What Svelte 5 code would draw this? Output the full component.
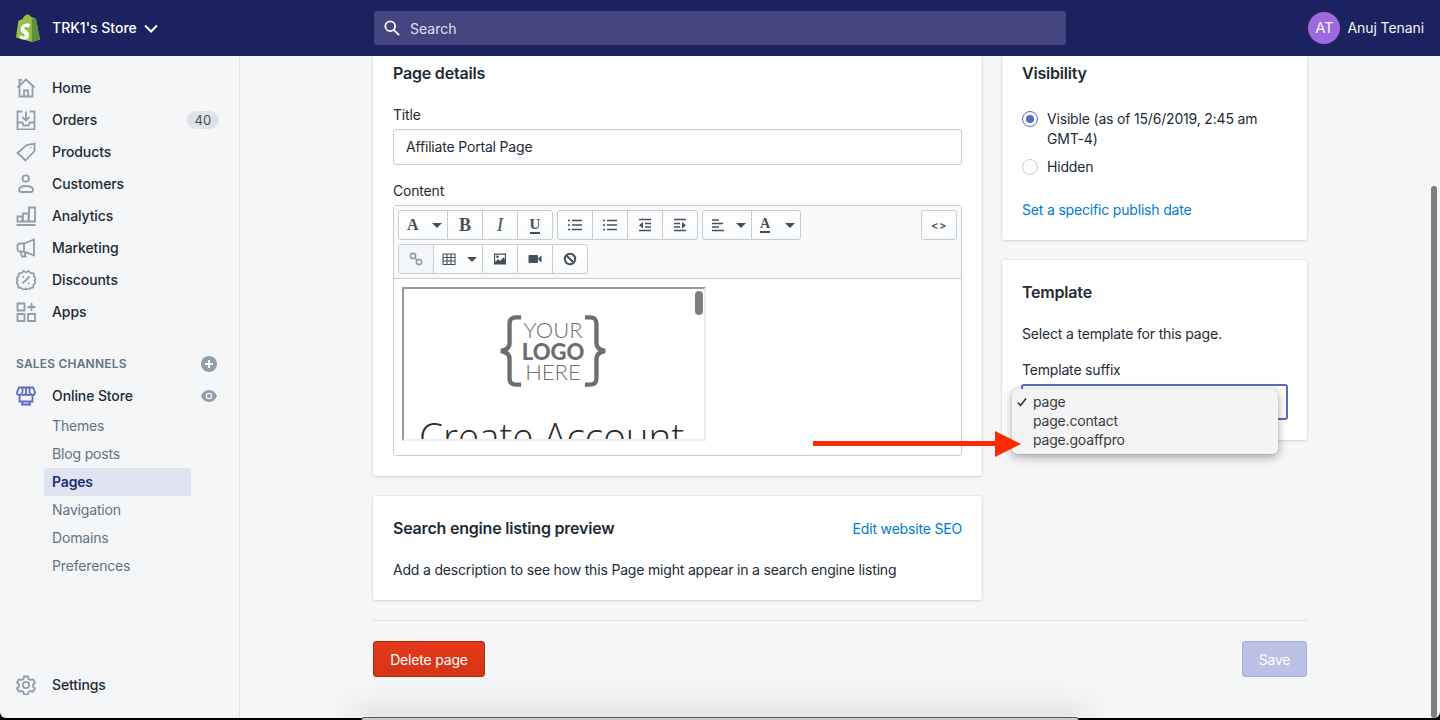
<script lang="ts">
	const nav = [
		{ label: 'Home', d: 'M1.500 9.500 10 1.500l8.500 8M3.500 8v10.500h13V8M8 18.500v-6h4v6M3.500 6.500V2H6' },
		{ label: 'Orders', d: 'M6.500 1.500h-5v18h17v-18h-5M10 1.500V10M6.500 7l3.500 3.500L13.500 7M1.500 12.500h5l1 3h5l1-3h5' },
		{ label: 'Products', d: 'M1.500 11 10.500 3l8-1.500V9l-9 9.500zM14.500 5.500h1' },
		{ label: 'Customers', d: 'M13 4.500a3.200 3.200 0 1 1-6.400 0 3.200 3.200 0 0 1 6.400 0zM3 16c0-2.500 3-4 7-4s7 1.500 7 4c0 1.500-1.500 2-2.500 2h-9C4.500 18 3 17.500 3 16z' },
		{ label: 'Analytics', d: 'M.500 19h19M1.500 15.500v-5h5v5zM7 15.500v-8h5.500v8zM13 15.500V1.500h6v14z' },
		{ label: 'Marketing', d: 'M1.500 7.500C1.500 6 2.500 5.500 4 5.500h4L18 1.500v16L8 13.500H4c-1.500 0-2.500-.5-2.500-2zM8 5.500v8M4.500 13.500l1.500 5h3.500l-1-5' },
		{ label: 'Discounts', d: 'M7.500 1 10 2.500 12.500 1l2.300 2 2.800.5.500 2.800L19.500 8.500 18.500 10.500l1 2-1.900 2.200-.5 2.800-2.800.5-2.300 2L10 18.500l-2.500 1.500-2.300-2-2.800-.5-.5-2.800L.500 12.500l1-2-1-2 1.900-2.200.5-2.800 2.800-.5zM13.500 6.500l-7 7M6.500 7h1.500M12 13.500h1.500' },
		{ label: 'Apps', d: 'M1.500 1.500h7v7h-7zM1.500 12h7v7h-7zM12 12h7v7h-7zM15.500 1v8M11.500 5h8' }
	];
	const subNav = ['Themes', 'Blog posts', 'Pages', 'Navigation', 'Domains', 'Preferences'];
	const options = ['page', 'page.contact', 'page.goaffpro'];
</script>

{#snippet caret()}
	<svg class="caret" viewBox="0 0 10 5"><path d="M0 0h10L5 5z" /></svg>
{/snippet}

{#snippet lines(d: string, tri = '')}
	<svg class="tool-icon" viewBox="0 0 14 14">
		<path {d} />
		{#if tri}<path class="tri" d={tri} />{/if}
	</svg>
{/snippet}

<div class="screen">
	<div class="window">
		<header class="topbar">
			<div class="store">
				<svg class="logo" viewBox="2 0 22 28" preserveAspectRatio="none">
					<path d="M2 23.500 4.200 6.500C6 6 7 5.500 8 5c1-2.500 3-4.500 5-4.500 1 0 1.500.5 2 1.500L17 3.500 19.500 4l.8 1L24 25.500 16.500 28z" fill="#95bf47" />
					<path d="M16.500 28 24 25.500 20.300 5 18 4.500 16.500 5z" fill="#5e8e3e" />
					<path d="M14.800 10.500l-1 3c-.8-.4-1.700-.6-2.500-.5-1.900.1-1.900 1.300-1.900 1.600.1 1.600 4.300 2 4.600 5.800.2 3-1.600 5-4.200 5.200-3 .2-4.700-1.600-4.700-1.600l.7-2.700s1.700 1.300 3 1.200c.9 0 1.200-.8 1.200-1.300-.1-2.100-3.600-2-3.800-5.500-.2-2.900 1.700-5.900 6-6.100 1.600-.1 2.600.4 2.600.4z" fill="#fff" />
				</svg>
				<span class="store-name">TRK1's Store</span>
				<svg class="chevron" viewBox="0 0 14 9"><path d="M1 1.500l6 6 6-6" /></svg>
			</div>
			<div class="search">
				<svg class="search-icon" viewBox="0 0 18 18"><path d="M12.500 7a5.500 5.500 0 1 1-11 0 5.500 5.500 0 0 1 11 0zM11 11l6 6" /></svg>
				<span>Search</span>
			</div>
			<div class="user">
				<span class="avatar">AT</span>
				<span>Anuj Tenani</span>
			</div>
		</header>

		<div class="body">
			<aside class="sidebar">
				<nav class="nav">
					{#each nav as item}
						<div class="nav-item">
							<svg class="nav-icon" viewBox="0 0 20 20"><path d={item.d} /></svg>
							<span>{item.label}</span>
							{#if item.label === 'Orders'}<span class="badge">40</span>{/if}
						</div>
					{/each}
				</nav>

				<div class="section-title">
					<span>Sales channels</span>
					<svg class="side-action" viewBox="0 0 16 16">
						<circle cx="8" cy="8" r="8" fill="#919eab" />
						<path d="M8 4v8M4 8h8" stroke="#f4f6f8" stroke-width="2" />
					</svg>
				</div>
				<div class="nav-item channel">
					<svg class="nav-icon store-icon" viewBox="0 0 20 20">
						<path d="M3 1.500h14l2 5c0 1.500-1 2.500-2.200 2.500S14.500 8 14.500 7c0 1-1 2-2.200 2S10 8 10 7c0 1-1 2-2.300 2S5.500 8 5.500 7c0 1-1 2-2.300 2S1 8 1 6.500zM3.500 9v6.500h13V9M6.500 15.500v3M13.500 15.500v3M5 18.500h10M6.500 2v5M13.500 2v5M10 2v5" />
					</svg>
					<span>Online Store</span>
					<svg class="side-action eye" viewBox="0 0 16 12">
						<path d="M8 0C4 0 1.200 3 0 6c1.200 3 4 6 8 6s6.800-3 8-6c-1.200-3-4-6-8-6z" fill="#919eab" />
						<circle cx="8" cy="6" r="3.300" fill="#f4f6f8" />
						<circle cx="8" cy="6" r="2" fill="#919eab" />
					</svg>
				</div>
				<div class="sub-nav">
					{#each subNav as item}
						<div class="sub-item" class:active={item === 'Pages'}>{item}</div>
					{/each}
				</div>

				<div class="nav-item settings">
					<svg class="nav-icon" viewBox="0 0 20 20">
						<path d="M8 1.500h4l.6 2.600 1.900 1 2.500-.8 2 3.400-2 1.800v2l2 1.800-2 3.400-2.500-.8-1.900 1-.6 2.600H8l-.6-2.600-1.900-1-2.500.8-2-3.400 2-1.800v-2l-2-1.800 2-3.400 2.500.8 1.900-1z" />
						<circle cx="10" cy="10" r="3.200" />
					</svg>
					<span>Settings</span>
				</div>
			</aside>

			<main class="main">
				<div class="content">
					<div class="columns">
						<div class="column">
							<section class="card details">
								<h2>Page details</h2>
								<div class="label">Title</div>
								<div class="input">Affiliate Portal Page</div>
								<div class="label content-label">Content</div>
								<div class="editor">
									<div class="toolbar">
										<div class="tool-row">
											<div class="group">
												<span class="tool wide"><b class="glyph">A</b>{@render caret()}</span>
												<span class="tool"><b class="glyph big">B</b></span>
												<span class="tool"><i class="glyph big">I</i></span>
												<span class="tool"><b class="glyph under">U</b></span>
											</div>
											<div class="group">
												<span class="tool">{@render lines('M0 2.500h2M0 7h2M0 11.500h2M4 2.500h10M4 7h10M4 11.500h10')}</span>
												<span class="tool">{@render lines('M0 2.500h2M0 7h2M0 11.500h2M4 2.500h10M4 7h10M4 11.500h10')}</span>
												<span class="tool">{@render lines('M1 1.500h12M7 5.500h6M7 9h6M1 12.500h12', 'M5 4v6.500L1 7.200z')}</span>
												<span class="tool">{@render lines('M1 1.500h12M1 5.500h6M1 9h6M1 12.500h12', 'M9 4v6.500l4-3.300z')}</span>
											</div>
											<div class="group">
												<span class="tool wide">{@render lines('M1 2h7M1 5.500h11M1 9h7M1 12.500h12')}{@render caret()}</span>
												<span class="tool wide"><b class="glyph color">A</b>{@render caret()}</span>
											</div>
											<div class="group code"><span class="tool code-tool">&lt;&gt;</span></div>
										</div>
										<div class="tool-row">
											<div class="group">
												<span class="tool off">
													<svg class="link-icon" viewBox="0 0 14 14"><circle cx="4" cy="4" r="2.600" /><circle cx="10" cy="10" r="2.600" /><path d="M6 6l2 2" /></svg>
												</span>
												<span class="tool wide">
													<svg class="table-icon" viewBox="0 0 14 14"><path d="M1 2h12v10.500H1zM1 5.500h12M1 9h12M5 2v10.500M9 2v10.500" /></svg>
													{@render caret()}
												</span>
												<span class="tool">
													<svg class="fill-icon" viewBox="0 0 14 14"><path fill-rule="evenodd" d="M1 1.500h12v11H1zM2.200 2.700v7.200l3-3 2 2 3-3.500 1.600 1.800V2.700zM4.500 3.500a1.300 1.300 0 1 1 0 2.600 1.300 1.300 0 0 1 0-2.600z" /></svg>
												</span>
												<span class="tool">
													<svg class="fill-icon" viewBox="0 0 14 14"><path d="M1.500 3h7.500c.5 0 1 .5 1 1v6c0 .5-.5 1-1 1H1.500c-.5 0-1-.5-1-1V4c0-.5.500-1 1-1zM10.500 6l3-2.500v7l-3-2.500z" /></svg>
												</span>
												<span class="tool">
													<svg class="ban-icon" viewBox="0 0 14 14"><circle cx="7" cy="7" r="5.200" /><path d="M3.300 3.300l7.400 7.400" /></svg>
												</span>
											</div>
										</div>
									</div>
									<div class="editor-body">
										<div class="preview">
											<div class="placeholder">
												<svg class="brace" viewBox="0 0 26 74"><path d="M24 2h-5c-5 0-7 2-7 7v20c0 4-3 7-9 8 6 1 9 4 9 8v20c0 5 2 7 7 7h5" /></svg>
												<div class="placeholder-text">
													<span>YOUR</span>
													<strong>LOGO</strong>
													<span>HERE</span>
												</div>
												<svg class="brace" viewBox="0 0 26 74"><path d="M2 2h5c5 0 7 2 7 7v20c0 4 3 7 9 8-6 1-9 4-9 8v20c0 5-2 7-7 7H2" /></svg>
											</div>
											<div class="create">Create Account</div>
											<span class="preview-scroll"></span>
										</div>
									</div>
								</div>
							</section>

							<section class="card seo">
								<div class="seo-head">
									<h2>Search engine listing preview</h2>
									<span class="link">Edit website SEO</span>
								</div>
								<p>Add a description to see how this Page might appear in a search engine listing</p>
							</section>
						</div>

						<div class="column">
							<section class="card visibility">
								<h2>Visibility</h2>
								<div class="radio-row">
									<span class="radio checked"></span>
									<span>Visible (as of 15/6/2019, 2:45 am GMT-4)</span>
								</div>
								<div class="radio-row hidden-row">
									<span class="radio"></span>
									<span>Hidden</span>
								</div>
								<div class="link publish">Set a specific publish date</div>
							</section>

							<section class="card template">
								<h2>Template</h2>
								<p>Select a template for this page.</p>
								<div class="label suffix">Template suffix</div>
								<div class="select">
									<div class="menu">
										{#each options as option, i}
											<div class="option">
												{#if i === 0}<svg class="check" viewBox="0 0 10 10"><path d="M1 5.500l2.500 3L9 1.500" /></svg>{/if}
												{option}
											</div>
										{/each}
									</div>
								</div>
							</section>
						</div>
					</div>

					<div class="actions">
						<button class="btn danger" type="button">Delete page</button>
						<button class="btn save" type="button">Save</button>
					</div>
				</div>
			</main>
		</div>

		<span class="scrollbar"></span>
	</div>

	<svg class="arrow" viewBox="0 0 208 26"><path d="M0 10h182V0l26 13-26 13V15H0z" /></svg>
	<div class="behind"></div>
</div>

<style>
	:global(body) {
		background: #000;
	}

	.screen {
		position: relative;
		height: 720px;
		overflow: hidden;
		background: #000;
		font-family: Inter, "Liberation Sans", sans-serif;
		font-size: 14px;
		line-height: 20px;
		letter-spacing: -0.18px;
		color: #212b36;
	}

	.window {
		position: relative;
		display: flex;
		flex-direction: column;
		height: 718px;
		overflow: hidden;
		background: #f4f6f8;
		border-radius: 0 0 6px 6px;
	}

	/* Top bar */
	.topbar {
		display: flex;
		flex: none;
		align-items: center;
		height: 56px;
		background: #1c2260;
		color: #fff;
	}

	.store {
		display: flex;
		flex: none;
		align-items: center;
		width: 374px;
		padding-left: 16px;
		box-sizing: border-box;
		font-weight: 500;
		letter-spacing: 0;
	}

	.logo {
		width: 24px;
		height: 28px;
	}

	.store-name {
		margin-left: 12px;
	}

	.chevron {
		width: 14px;
		height: 9px;
		margin-left: 7px;
		fill: none;
		stroke: #fff;
		stroke-width: 2;
	}

	.search {
		display: flex;
		align-items: center;
		width: 692px;
		height: 34px;
		padding-left: 10px;
		box-sizing: border-box;
		border-radius: 3px;
		background: #43467f;
		color: #dfe3e8;
		letter-spacing: 0;
	}

	.search span {
		padding-top: 2px;
	}

	.search-icon {
		width: 16px;
		height: 16px;
		margin-right: 10px;
		fill: none;
		stroke: #fff;
		stroke-width: 2;
	}

	.user {
		display: flex;
		align-items: center;
		gap: 7px;
		margin-left: auto;
		padding-right: 16px;
		color: #f4f6f8;
		letter-spacing: -0.08px;
	}

	.avatar {
		display: flex;
		align-items: center;
		justify-content: center;
		width: 32px;
		height: 32px;
		border-radius: 50%;
		background: #9c6ade;
		font-size: 15px;
	}

	.body {
		display: flex;
		flex: 1;
		min-height: 0;
	}

	/* Sidebar */
	.sidebar {
		display: flex;
		flex: none;
		flex-direction: column;
		width: 240px;
		padding-top: 16px;
		box-sizing: border-box;
		border-right: 1px solid #dfe3e8;
		font-weight: 450;
		letter-spacing: -0.1px;
	}

	.nav-item {
		display: flex;
		align-items: center;
		height: 32px;
		padding: 0 20px 0 16px;
		color: #212b36;
	}

	.nav-icon {
		flex: none;
		width: 20px;
		height: 20px;
		margin-right: 16px;
		fill: none;
		stroke: #919eab;
		stroke-width: 1.800;
	}

	.store-icon {
		stroke: #5c6ac4;
	}

	.badge {
		margin-left: auto;
		padding: 0 8px;
		border-radius: 10px;
		background: #dfe3e8;
		font-size: 13px;
		font-weight: 400;
		line-height: 18px;
		color: #454f5b;
	}

	.section-title {
		display: flex;
		align-items: center;
		justify-content: space-between;
		height: 32px;
		margin-top: 20px;
		padding: 0 22px 0 16px;
		font-size: 12px;
		font-weight: 600;
		letter-spacing: 0.2px;
		text-transform: uppercase;
		color: #637381;
	}

	.side-action {
		width: 16px;
		height: 16px;
	}

	.eye {
		height: 12px;
		margin-left: auto;
		margin-right: 2px;
	}

	.sub-nav {
		display: flex;
		flex-direction: column;
		padding-left: 44px;
		font-weight: 400;
		letter-spacing: -0.16px;
		color: #637381;
	}

	.sub-item {
		width: 147px;
		height: 28px;
		padding-left: 8px;
		box-sizing: border-box;
		line-height: 28px;
	}

	.sub-item.active {
		border-radius: 3px;
		background: #e0e4f2;
		font-weight: 600;
		color: #202e78;
	}

	.settings {
		margin-top: auto;
		margin-bottom: 17px;
	}

	/* Main */
	.main {
		flex: 1;
		min-width: 0;
		overflow: hidden;
	}

	.content {
		width: 934px;
		margin-left: 133px;
	}

	.columns {
		display: grid;
		grid-template-columns: 609px 305px;
		gap: 20px;
		padding-bottom: 20px;
		border-bottom: 1px solid #dfe3e8;
	}

	.column {
		display: flex;
		flex-direction: column;
		gap: 20px;
	}

	.card {
		padding: 0 20px;
		border-radius: 3px;
		background: #fff;
		box-shadow: 0 0 0 1px rgba(63, 63, 68, 0.05), 0 1px 3px 0 rgba(63, 63, 68, 0.15);
	}

	h2 {
		margin: 0;
		font-size: 16px;
		font-weight: 600;
		line-height: 24px;
		letter-spacing: -0.2px;
	}

	p {
		margin: 0;
	}

	.link {
		color: #007ace;
	}

	.details {
		height: 420px;
		padding-top: 5px;
		box-sizing: border-box;
		border-radius: 0 0 3px 3px;
	}

	.label {
		margin-top: 20px;
		margin-bottom: 4px;
	}

	.input {
		height: 36px;
		padding: 0 12px;
		box-sizing: border-box;
		border: 1px solid #c4cdd5;
		border-radius: 3px;
		line-height: 34px;
		box-shadow: inset 0 1px 0 rgba(99, 115, 129, 0.05);
	}

	.content-label {
		margin-top: 16px;
	}

	/* Editor */
	.editor {
		height: 251px;
		box-sizing: border-box;
		border: 1px solid #c4cdd5;
		border-radius: 3px;
		overflow: hidden;
	}

	.toolbar {
		display: flex;
		flex-direction: column;
		gap: 4px;
		height: 73px;
		padding: 4px;
		box-sizing: border-box;
		border-bottom: 1px solid #c4cdd5;
		background: #f9fafb;
	}

	.tool-row {
		display: flex;
		gap: 4px;
		height: 30px;
	}

	.group {
		display: flex;
		border: 1px solid #c4cdd5;
		border-radius: 3px;
		background: linear-gradient(#fff, #f9fafb);
		overflow: hidden;
	}

	.group.code {
		margin-left: auto;
	}

	.tool {
		display: flex;
		align-items: center;
		justify-content: center;
		width: 35px;
		box-sizing: border-box;
		border-left: 1px solid #c4cdd5;
		color: #454f5b;
	}

	.tool:first-child {
		width: 34px;
		border-left: 0;
	}

	.tool.wide {
		justify-content: space-between;
		width: 49px;
		padding: 0 5px 0 8px;
	}

	.tool.wide:first-child {
		width: 48px;
	}

	.tool.off {
		background: #f4f6f8;
	}

	.code-tool {
		font-size: 11px;
		font-weight: 600;
		letter-spacing: 0.5px;
	}

	.glyph {
		font-family: "Liberation Serif", serif;
		font-size: 16px;
		letter-spacing: 0;
	}

	.glyph.big {
		font-size: 18px;
	}

	.glyph.under {
		font-size: 15px;
		line-height: 15px;
		border-bottom: 2px solid #454f5b;
	}

	.glyph.color {
		font-size: 14px;
		line-height: 14px;
		border-bottom: 2px solid #454f5b;
	}

	.caret {
		width: 10px;
		height: 5px;
		fill: #454f5b;
	}

	.tool-icon {
		width: 14px;
		height: 14px;
		fill: none;
		stroke: #454f5b;
		stroke-width: 1.700;
	}

	.tri {
		fill: #454f5b;
		stroke: none;
	}

	.link-icon {
		width: 14px;
		height: 14px;
		fill: none;
		stroke: #919eab;
		stroke-width: 1.600;
	}

	.table-icon {
		width: 14px;
		height: 14px;
		fill: none;
		stroke: #454f5b;
		stroke-width: 1.100;
	}

	.fill-icon {
		width: 14px;
		height: 14px;
		fill: #454f5b;
	}

	.ban-icon {
		width: 14px;
		height: 14px;
		fill: none;
		stroke: #454f5b;
		stroke-width: 2;
	}

	.editor-body {
		height: 176px;
		padding: 8px;
		box-sizing: border-box;
		background: #fff;
	}

	/* Embedded page inside the editor */
	.preview {
		position: relative;
		width: 304px;
		height: 154px;
		box-sizing: border-box;
		border: 2px solid;
		border-color: #9a9a9a #ededed #ededed #9a9a9a;
		overflow: hidden;
	}

	.placeholder {
		display: flex;
		align-items: center;
		justify-content: center;
		margin-top: 25px;
		margin-left: -2px;
		color: #6d6e71;
	}

	.brace {
		width: 25px;
		height: 74px;
		fill: none;
		stroke: #6d6e71;
		stroke-width: 4.500;
	}

	.placeholder-text {
		display: flex;
		flex-direction: column;
		align-items: center;
		width: 60px;
		font-family: Lato, sans-serif;
		font-size: 22px;
		font-weight: 300;
		line-height: 20px;
		letter-spacing: 0;
	}

	.placeholder-text strong {
		margin-top: 2px;
		font-weight: 900;
	}

	.create {
		margin-top: 28px;
		margin-left: 15px;
		font-family: "Open Sans", sans-serif;
		font-size: 38.500px;
		font-weight: 300;
		line-height: 40px;
		letter-spacing: 0;
		white-space: nowrap;
		color: #2b2b2b;
	}

	.preview-scroll {
		position: absolute;
		top: 2px;
		right: 1px;
		width: 8px;
		height: 24px;
		border-radius: 4px;
		background: #7f7f7f;
	}

	/* Search engine preview */
	.seo {
		height: 104px;
	}

	.seo-head {
		display: flex;
		align-items: center;
		justify-content: space-between;
		padding-top: 20px;
	}

	.seo-head .link {
		margin-top: 2px;
	}

	.seo p {
		margin-top: 20px;
	}

	/* Visibility */
	.visibility {
		height: 184px;
		padding-top: 5px;
		box-sizing: border-box;
		border-radius: 0 0 3px 3px;
	}

	.radio-row {
		display: flex;
		gap: 9px;
		margin-top: 24px;
	}

	.hidden-row {
		margin-top: 8px;
	}

	.radio {
		position: relative;
		flex: none;
		width: 16px;
		height: 16px;
		margin-top: 2px;
		box-sizing: border-box;
		border: 1px solid #c4cdd5;
		border-radius: 50%;
		background: linear-gradient(#fff, #f9fafb);
	}

	.radio.checked {
		border-color: #5c6ac4;
	}

	.radio.checked::after {
		content: '';
		position: absolute;
		top: 3px;
		left: 3px;
		width: 8px;
		height: 8px;
		border-radius: 50%;
		background: #5c6ac4;
	}

	.publish {
		margin-top: 23px;
	}

	/* Template */
	.template {
		position: relative;
		height: 180px;
		padding-top: 20px;
		box-sizing: border-box;
	}

	.template p {
		margin-top: 20px;
	}

	.suffix {
		margin-top: 16px;
		margin-bottom: 4px;
	}

	.select {
		position: relative;
		height: 36px;
		box-sizing: border-box;
		margin-left: -1px;
		margin-right: -1px;
		border: 2px solid #5c6ac4;
		border-radius: 3px;
	}

	/* Native-looking popup over the select */
	.menu {
		position: absolute;
		top: 3px;
		left: -11px;
		width: 266px;
		height: 65px;
		padding-top: 3px;
		box-sizing: border-box;
		border-radius: 5px;
		background: #f4f4f4;
		box-shadow: 0 0 1px rgba(0, 0, 0, 0.3), 0 3px 10px rgba(0, 0, 0, 0.35);
	}

	.option {
		position: relative;
		height: 19px;
		padding-left: 21px;
		line-height: 19px;
		color: #3b3b3b;
	}

	.check {
		position: absolute;
		top: 5px;
		left: 5px;
		width: 10px;
		height: 10px;
		fill: none;
		stroke: #333;
		stroke-width: 1.600;
	}

	/* Bottom actions */
	.actions {
		display: flex;
		justify-content: space-between;
		margin-top: 20px;
	}

	.btn {
		height: 36px;
		padding: 0;
		border-radius: 3px;
		font-family: inherit;
		font-size: 14px;
		letter-spacing: inherit;
		white-space: nowrap;
		color: #fff;
	}

	.danger {
		width: 112px;
		border: 1px solid #b02b13;
		background: linear-gradient(#e6391a, #d53417);
	}

	.save {
		width: 65px;
		border: 1px solid #a7aedf;
		background: #bac0e6;
	}

	.scrollbar {
		position: absolute;
		top: 186px;
		right: 3px;
		bottom: 0;
		width: 6px;
		border-radius: 3px;
		background: #7f7f7f;
	}

	/* Annotation and the window peeking out below */
	.arrow {
		position: absolute;
		top: 431px;
		left: 813px;
		width: 208px;
		height: 26px;
		fill: #ff2a00;
	}

	.behind {
		position: absolute;
		top: 717px;
		left: 362px;
		width: 716px;
		height: 3px;
		box-sizing: border-box;
		border-top: 1px solid #5a5a5a;
		border-radius: 2px 2px 0 0;
		background: #c8c8c8;
		box-shadow: 0 0 30px 8px rgba(0, 0, 0, 0.12);
	}
</style>
